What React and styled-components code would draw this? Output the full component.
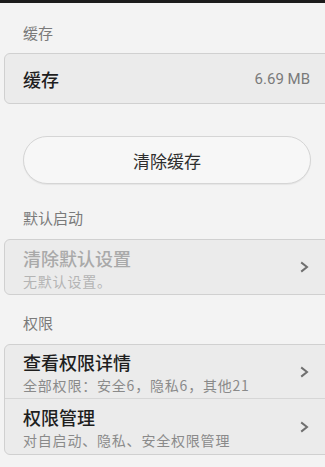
import styled, { createGlobalStyle } from "styled-components";

const GlobalStyle = createGlobalStyle`
  html, body {
    margin: 0;
    padding: 0;
    background: #f3f3f3;
    overflow: hidden;
  }
  body {
    font-family: "Noto Sans CJK SC", "Noto Sans", Roboto, sans-serif;
  }
`;

const Page = styled.div`
  width: 325px;
  height: 467px;
  overflow: hidden;
  background: #f3f3f3;
`;

const TopBar = styled.div`
  height: 3px;
  background: #1b1b1b;
`;

const SectionHeader = styled.div`
  padding: ${(p) => p.$top}px 23px ${(p) => p.$bottom}px;
  font-size: 15px;
  line-height: 15px;
  color: #7a7a7a;
`;

const Card = styled.div`
  margin: 0 -8px 0 4px;
  background: #ebebeb;
  border: 1px solid #d0d0d0;
  border-radius: 6px;
  overflow: hidden;
`;

const Row = styled.div`
  display: flex;
  align-items: center;
  height: ${(p) => p.$height}px;
  padding: 0 23px 0 18px;
  box-sizing: border-box;
  & + & {
    border-top: 1px solid #d6d6d6;
  }
`;

const RowText = styled.div`
  flex: 1;
  display: flex;
  flex-direction: column;
  padding-top: 1px;
`;

const Title = styled.div`
  font-size: 18px;
  line-height: 22px;
  font-weight: 500;
  color: ${(p) => (p.$disabled ? "#a9a9a9" : "#1e1e1e")};
`;

const Subtitle = styled.div`
  margin-top: 4px;
  font-size: 14px;
  line-height: 16px;
  letter-spacing: 0.8px;
  color: ${(p) => (p.$disabled ? "#b4b4b4" : "#8a8a8a")};
`;

const Value = styled.span`
  font-family: Roboto, "Noto Sans", sans-serif;
  font-size: 15px;
  color: #7a7a7a;
  margin-right: -1px;
`;

const ButtonWrap = styled.div`
  padding: 32px 14px 0 23px;
`;

const PillButton = styled.button`
  display: block;
  width: 100%;
  height: 48px;
  border-radius: 24px;
  border: 1px solid #d5d5d5;
  background: #f7f7f7;
  box-shadow: 0 1px 1px rgba(0, 0, 0, 0.06);
  font-family: "Noto Sans CJK SC", sans-serif;
  font-size: 17px;
  color: #2e2e2e;
  padding: 0;
`;

const Chevron = () => (
  <svg width="9" height="12" viewBox="0 0 9 12">
    <polyline
      points="2,2 7,6 2,10"
      fill="none"
      stroke="#6f6f6f"
      strokeWidth="2"
      strokeLinecap="square"
    />
  </svg>
);

const ListRow = ({ title, subtitle, disabled, height }) => (
  <Row $height={height}>
    <RowText>
      <Title $disabled={disabled}>{title}</Title>
      <Subtitle $disabled={disabled}>{subtitle}</Subtitle>
    </RowText>
    <Chevron />
  </Row>
);

export default function App() {
  return (
    <Page>
      <GlobalStyle />
      <TopBar />
      <SectionHeader $top={22} $bottom={13}>缓存</SectionHeader>
      <Card>
        <Row $height={49}>
          <RowText>
            <Title>缓存</Title>
          </RowText>
          <Value>6.69 MB</Value>
        </Row>
      </Card>
      <ButtonWrap>
        <PillButton>清除缓存</PillButton>
      </ButtonWrap>
      <SectionHeader $top={26} $bottom={14}>默认启动</SectionHeader>
      <Card>
        <ListRow title="清除默认设置" subtitle="无默认设置。" disabled height={54} />
      </Card>
      <SectionHeader $top={20} $bottom={14}>权限</SectionHeader>
      <Card>
        <ListRow title="查看权限详情" subtitle="全部权限：安全6，隐私6，其他21" height={53} />
        <ListRow title="权限管理" subtitle="对自启动、隐私、安全权限管理" height={56} />
      </Card>
    </Page>
  );
}
